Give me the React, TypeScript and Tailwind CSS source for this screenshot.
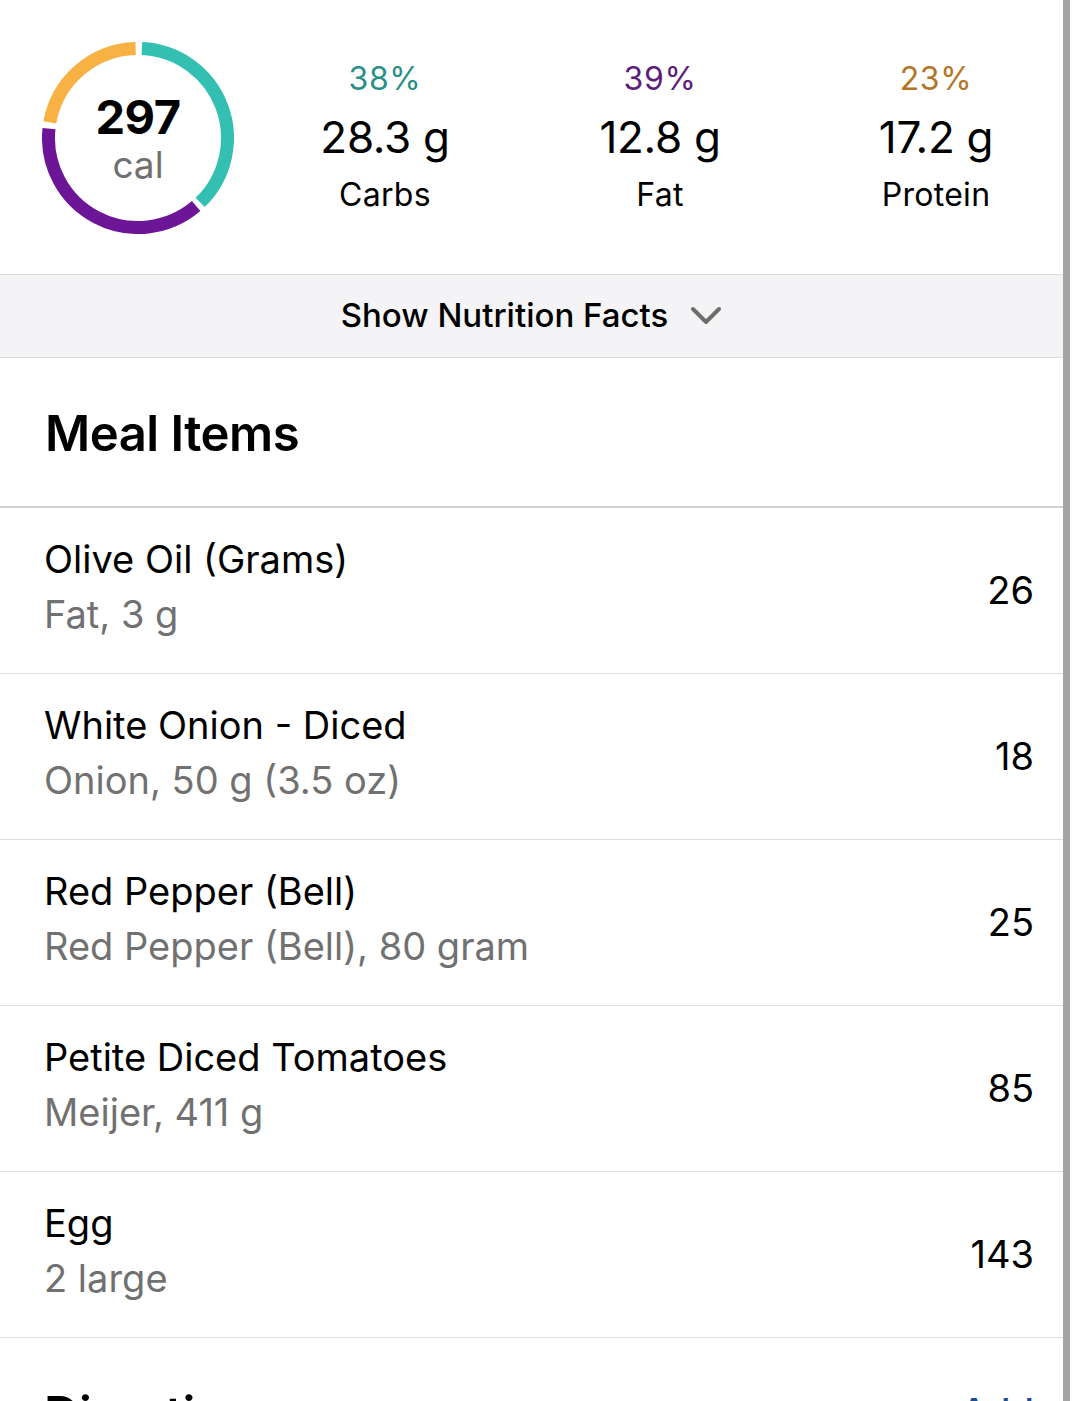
import { FC } from "react"

interface MealItem {
  name: string
  detail: string
  calories: number
}

const items: MealItem[] = [
  { name: "Olive Oil (Grams)", detail: "Fat, 3 g", calories: 26 },
  { name: "White Onion - Diced", detail: "Onion, 50 g (3.5 oz)", calories: 18 },
  { name: "Red Pepper (Bell)", detail: "Red Pepper (Bell), 80 gram", calories: 25 },
  { name: "Petite Diced Tomatoes", detail: "Meijer, 411 g", calories: 85 },
  { name: "Egg", detail: "2 large", calories: 143 },
]

// angle 0 = 12 o'clock, clockwise
const arc = (start: number, end: number, r: number, c: number) => {
  const pt = (a: number) => {
    const rad = ((a - 90) * Math.PI) / 180
    return `${c + r * Math.cos(rad)} ${c + r * Math.sin(rad)}`
  }
  const large = end - start > 180 ? 1 : 0
  return `M ${pt(start)} A ${r} ${r} 0 ${large} 1 ${pt(end)}`
}

const Ring: FC = () => (
  <div className="relative w-[192px] h-[192px]">
    <svg width="192" height="192" viewBox="0 0 192 192">
      <path d={arc(2.5, 136, 89.5, 96)} fill="none" stroke="#33bfb2" strokeWidth="13" />
      <path d={arc(139.5, 276, 89.5, 96)} fill="none" stroke="#6c1597" strokeWidth="13" />
      <path d={arc(280, 358.5, 89.5, 96)} fill="none" stroke="#f8b143" strokeWidth="13" />
    </svg>
    <div className="absolute inset-0 flex flex-col items-center justify-center">
      <span className="text-[47px] leading-[50px] font-bold text-black tracking-[-0.5px] mt-[4px]">297</span>
      <span className="text-[37px] leading-[46px] text-[#707070]">cal</span>
    </div>
  </div>
)

interface MacroProps {
  pct: string
  color: string
  grams: string
  label: string
  width: string
}

const Macro: FC<MacroProps> = ({ pct, color, grams, label, width }) => (
  <div className={`flex flex-col items-center shrink-0 ${width}`}>
    <span className={`text-[32px] leading-[40px] tracking-[0.6px] ${color}`}>{pct}</span>
    <span className="text-[44px] leading-[76px] text-black tracking-[-0.3px]">{grams}</span>
    <span className="text-[32px] leading-[40px] text-black tracking-[0.3px]">{label}</span>
  </div>
)

const Row: FC<{ item: MealItem }> = ({ item }) => (
  <div className="flex items-center justify-between h-[166px] border-b border-[#dddddd] pl-[44px] pr-[29px]">
    <div className="flex flex-col pb-[8px]">
      <span className="text-[38px] leading-[55px] text-black">{item.name}</span>
      <span className="text-[38px] leading-[55px] text-[#717171]">{item.detail}</span>
    </div>
    <span className="text-[38px] text-black">{item.calories}</span>
  </div>
)

const App: FC = () => {
  return (
    <div className="flex w-[1080px] h-[1401px] overflow-hidden bg-white font-['Inter',sans-serif]">
      <div className="w-[1063px] shrink-0 overflow-hidden">
        <div className="flex items-center h-[275px] border-b border-[#dddddd]">
          <div className="w-[248px] shrink-0 pl-[42px] pt-[2px]">
            <Ring />
          </div>
          <Macro pct="38%" color="text-[#2b9084]" grams="28.3 g" label="Carbs" width="w-[274px]" />
          <Macro pct="39%" color="text-[#5d1b7c]" grams="12.8 g" label="Fat" width="w-[276px]" />
          <Macro pct="23%" color="text-[#b47426]" grams="17.2 g" label="Protein" width="w-[276px]" />
        </div>

        <div className="flex items-center justify-center gap-[22px] h-[83px] bg-[#f4f4f6] border-b border-[#dddddd]">
          <span className="text-[33px] font-medium text-black">Show Nutrition Facts</span>
          <svg width="32" height="22" viewBox="0 0 32 22">
            <path d="M3 4 L16 17 L29 4" fill="none" stroke="#6e6e6e" strokeWidth="4" strokeLinecap="round" strokeLinejoin="round" />
          </svg>
        </div>

        <div className="flex items-center h-[150px] pl-[45px] pt-[4px] border-b-2 border-[#d2d2d2]">
          <h2 className="text-[49px] font-semibold text-black tracking-[-0.5px]">Meal Items</h2>
        </div>

        {items.map((item) => (
          <Row key={item.name} item={item} />
        ))}

        <div className="flex items-start justify-between pl-[44px] pr-[29px] pt-[40px]">
          <h2 className="text-[49px] font-semibold text-black tracking-[-0.5px]">Directions</h2>
          <span className="text-[38px] font-medium text-[#1d4e8f] pt-[6px]">Add</span>
        </div>
      </div>
      <div className="w-[7px] shrink-0 bg-[#a4a4a4]" />
      <div className="flex-1 bg-white" />
    </div>
  )
}

export default App
